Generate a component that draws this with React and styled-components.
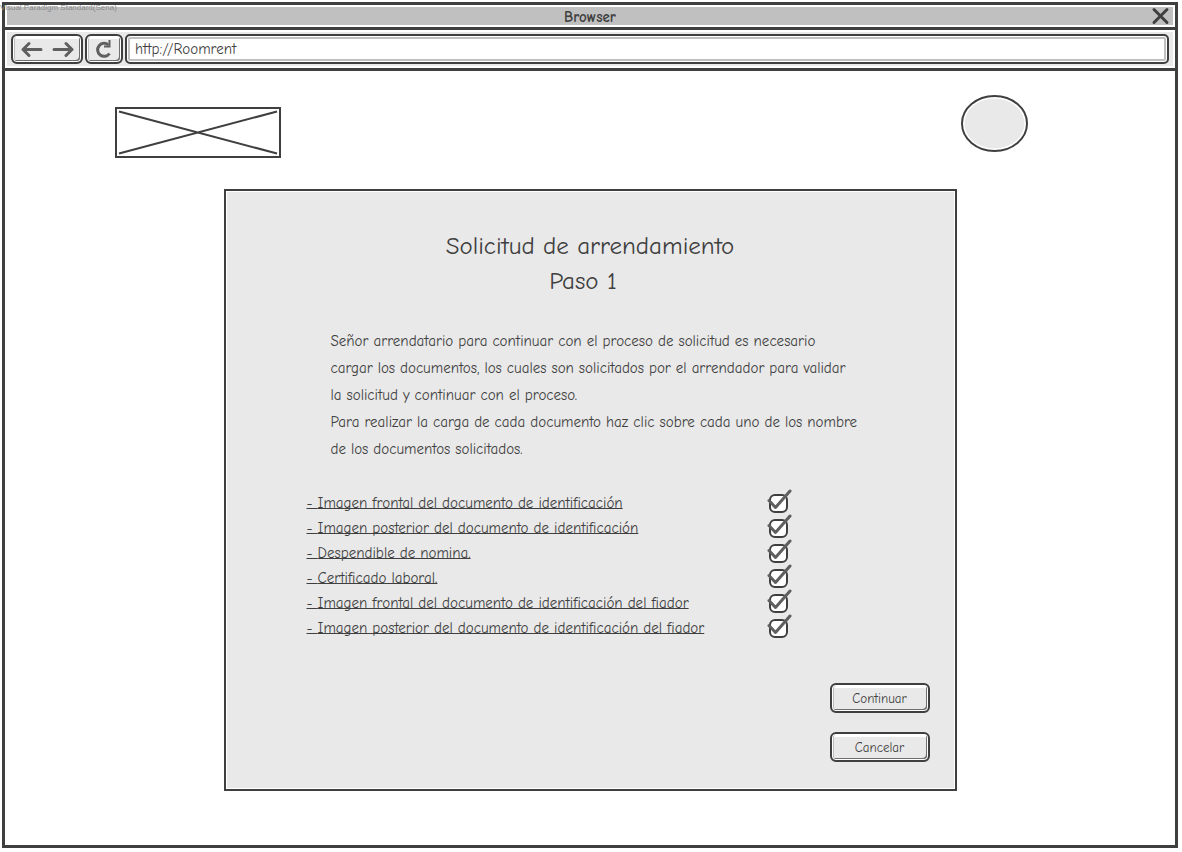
import React from "react";
import styled, { createGlobalStyle } from "styled-components";

const ink = "#3f3f3f";
const stroke = "#5f5f5f";
const panel = "#e9e9e9";
const bar = "#c0c0c0";

const GlobalStyle = createGlobalStyle`
  *, *::before, *::after { box-sizing: border-box; }
  body {
    margin: 0;
    background: #fff;
    color: ${ink};
    font-family: "Comic Sans MS", "Comic Neue", "Noto Sans", sans-serif;
  }
`;

const Page = styled.div`
  position: relative;
  display: flex;
  min-height: 100vh;
  padding: 2px 4px 4px 2px;
`;

const Watermark = styled.span`
  position: absolute;
  top: 3px;
  left: 0;
  font: 8px/10px "Liberation Sans", sans-serif;
  color: #8a8a8a;
`;

const Window = styled.div`
  flex: 1;
  display: flex;
  flex-direction: column;
  border: 3px solid ${ink};
`;

const TitleBar = styled.header`
  display: flex;
  align-items: center;
  justify-content: center;
  height: 25px;
  border-bottom: 3px solid ${ink};
  background: ${bar};
  box-shadow: inset 0 0 0 2px #fff;
  position: relative;
`;

const WindowTitle = styled.span`
  padding-top: 2px;
  font-size: 15px;
  line-height: 20px;
  font-weight: 700;
`;

const CloseButton = styled.button`
  position: absolute;
  right: 5px;
  top: 2px;
  display: flex;
  padding: 0;
  border: 0;
  background: none;
`;

const Toolbar = styled.nav`
  display: flex;
  align-items: center;
  gap: 2px;
  height: 41px;
  padding: 0 6px;
  border-bottom: 3px solid ${ink};
  background: ${panel};
  box-shadow: inset 0 0 0 2px #fff;
`;

const raised = `
  border: 2px solid ${ink};
  border-radius: 6px;
  background: ${panel};
  box-shadow: inset 0 0 0 1px #fff, inset -2px -2px 0 0 #6f6f6f, inset 2px 0 0 0 #bdbdbd, inset 0 3px 0 0 #fff;
  color: ${ink};
`;

const ToolGroup = styled.div`
  ${raised}
  display: flex;
  align-items: center;
  justify-content: space-between;
  width: ${(p) => (p.$wide ? "72px" : "38px")};
  height: 30px;
  padding: 0 7px;
`;

const ToolButton = styled.button`
  display: flex;
  padding: 0;
  border: 0;
  background: none;
`;

const Address = styled.input`
  flex: 1;
  min-width: 0;
  height: 30px;
  padding: 0 8px;
  border: 2px solid ${ink};
  border-radius: 5px;
  outline: none;
  background: #fff;
  box-shadow: inset 0 0 0 1px #fff, inset 0 0 0 3px ${bar};
  color: ${ink};
  font-family: inherit;
  font-size: 15px;
`;

const Content = styled.main`
  display: flex;
  flex-direction: column;
  padding: 24px 0 54px;
`;

const Brand = styled.div`
  display: flex;
  align-items: flex-start;
  justify-content: space-between;
  padding: 0 147px 0 110px;
`;

const Logo = styled.svg`
  margin-top: 12px;
`;

const Card = styled.form`
  display: flex;
  flex-direction: column;
  width: 733px;
  max-width: 100%;
  min-height: 602px;
  margin: 31px auto 0;
  padding: 37px 25px 27px;
  border: 2px solid ${ink};
  background: ${panel};
  box-shadow: inset 0 0 0 1px #fff;
`;

const Heading = styled.h1`
  margin: 0;
  font-size: 25px;
  line-height: 35px;
  font-weight: 400;
  text-align: center;
`;

const Step = styled.span`
  display: block;
  padding-right: 14px;
`;

const Intro = styled.div`
  margin: 30px 0 0 80px;
  font-size: 15px;
  line-height: 27px;
  white-space: nowrap;

  p { margin: 0; }
`;

const Documents = styled.ul`
  margin: 28px 0 0;
  padding: 0 142px 0 56px;
  list-style: none;
`;

const DocumentRow = styled.li`
  display: flex;
  align-items: center;
  justify-content: space-between;
  height: 25px;
`;

const DocumentLink = styled.a`
  color: ${ink};
  font-size: 15px;
  line-height: 25px;
  white-space: nowrap;
  text-decoration: underline 1px;
  text-underline-offset: 0;
  text-decoration-skip-ink: none;
`;

const Tick = styled.span`
  position: relative;
  display: flex;

  svg {
    position: absolute;
    left: -3px;
    top: -6px;
    pointer-events: none;
  }
`;

const TickBox = styled.input`
  appearance: none;
  width: 19px;
  height: 19px;
  margin: 0;
  border: 2px solid ${ink};
  border-radius: 6px;
  background: #fff;
`;

const Actions = styled.div`
  display: flex;
  flex-direction: column;
  align-items: flex-end;
  gap: 19px;
  margin-top: auto;
`;

const ActionButton = styled.button`
  ${raised}
  width: 100px;
  height: 30px;
  padding: 0;
  font-family: inherit;
  font-size: 13px;
`;

const documents = [
  "Imagen frontal del documento de identificación",
  "Imagen posterior del documento de identificación",
  "Despendible de nomina.",
  "Certificado laboral.",
  "Imagen frontal del documento de identificación del fiador",
  "Imagen posterior del documento de identificación del fiador",
];

const line = { fill: "none", stroke, strokeWidth: 3, strokeLinecap: "round", strokeLinejoin: "round" };

export default function App() {
  return (
    <>
      <GlobalStyle />
      <Page>
        <Window>
          <TitleBar>
            <WindowTitle>Browser</WindowTitle>
            <CloseButton type="button" aria-label="Close">
              <svg width="19" height="18" viewBox="0 0 19 18">
                <path d="M3 2.500 L16 15.500 M16 2.500 L3 15.500" {...line} stroke={ink} />
              </svg>
            </CloseButton>
          </TitleBar>
          <Toolbar>
            <ToolGroup $wide>
              <ToolButton type="button" aria-label="Back">
                <svg width="24" height="18" viewBox="0 0 24 18">
                  <path d="M21 9.500 H3 M9 3.500 L3 9.500 L9 15.500" {...line} />
                </svg>
              </ToolButton>
              <ToolButton type="button" aria-label="Forward">
                <svg width="24" height="18" viewBox="0 0 24 18">
                  <path d="M4 9.500 H22 M16 3.500 L22 9.500 L16 15.500" {...line} />
                </svg>
              </ToolButton>
            </ToolGroup>
            <ToolGroup>
              <ToolButton type="button" aria-label="Reload">
                <svg width="20" height="20" viewBox="0 0 20 20">
                  <path d="M14.500 6 A6.500 6.500 0 1 0 15.500 14.500" {...line} strokeLinecap="butt" />
                  <path d="M15.500 1 V7.500 H10" {...line} strokeWidth="2" strokeLinecap="butt" strokeLinejoin="miter" />
                </svg>
              </ToolButton>
            </ToolGroup>
            <Address aria-label="Address" defaultValue="http://Roomrent" />
          </Toolbar>
          <Content>
            <Brand>
              <Logo width="166" height="51" viewBox="0 0 166 51" role="img" aria-label="Logo">
                <rect x="1" y="1" width="164" height="49" fill="#fff" stroke={ink} strokeWidth="2" />
                <path d="M4 4.500 L162 46.500 M162 4.500 L4 46.500" stroke={ink} strokeWidth="2" />
              </Logo>
              <svg width="67" height="57" viewBox="0 0 67 57" role="img" aria-label="Avatar">
                <ellipse cx="33.5" cy="28.5" rx="32.5" ry="27.5" fill="#fff" stroke={ink} strokeWidth="2" />
                <ellipse cx="33.5" cy="28.5" rx="30" ry="25" fill={panel} />
              </svg>
            </Brand>
            <Card onSubmit={(e) => e.preventDefault()}>
              <Heading>
                Solicitud de arrendamiento
                <Step>Paso 1</Step>
              </Heading>
              <Intro>
                <p>
                  Señor arrendatario para continuar con el proceso de solicitud es necesario
                  <br />
                  cargar los documentos, los cuales son solicitados por el arrendador para validar
                  <br />
                  la solicitud y continuar con el proceso.
                </p>
                <p>
                  Para realizar la carga de cada documento haz clic sobre cada uno de los nombre
                  <br />
                  de los documentos solicitados.
                </p>
              </Intro>
              <Documents>
                {documents.map((name, i) => (
                  <DocumentRow key={name}>
                    <DocumentLink id={`doc-${i}`} href="#">- {name}</DocumentLink>
                    <Tick>
                      <TickBox type="checkbox" defaultChecked aria-labelledby={`doc-${i}`} />
                      <svg width="26" height="24" viewBox="0 0 26 24">
                        <path d="M3 12.500 L9.500 19.500 L24 3" {...line} />
                      </svg>
                    </Tick>
                  </DocumentRow>
                ))}
              </Documents>
              <Actions>
                <ActionButton type="submit">Continuar</ActionButton>
                <ActionButton type="button">Cancelar</ActionButton>
              </Actions>
            </Card>
          </Content>
        </Window>
        <Watermark>Visual Paradigm Standard(Sena)</Watermark>
      </Page>
    </>
  );
}
